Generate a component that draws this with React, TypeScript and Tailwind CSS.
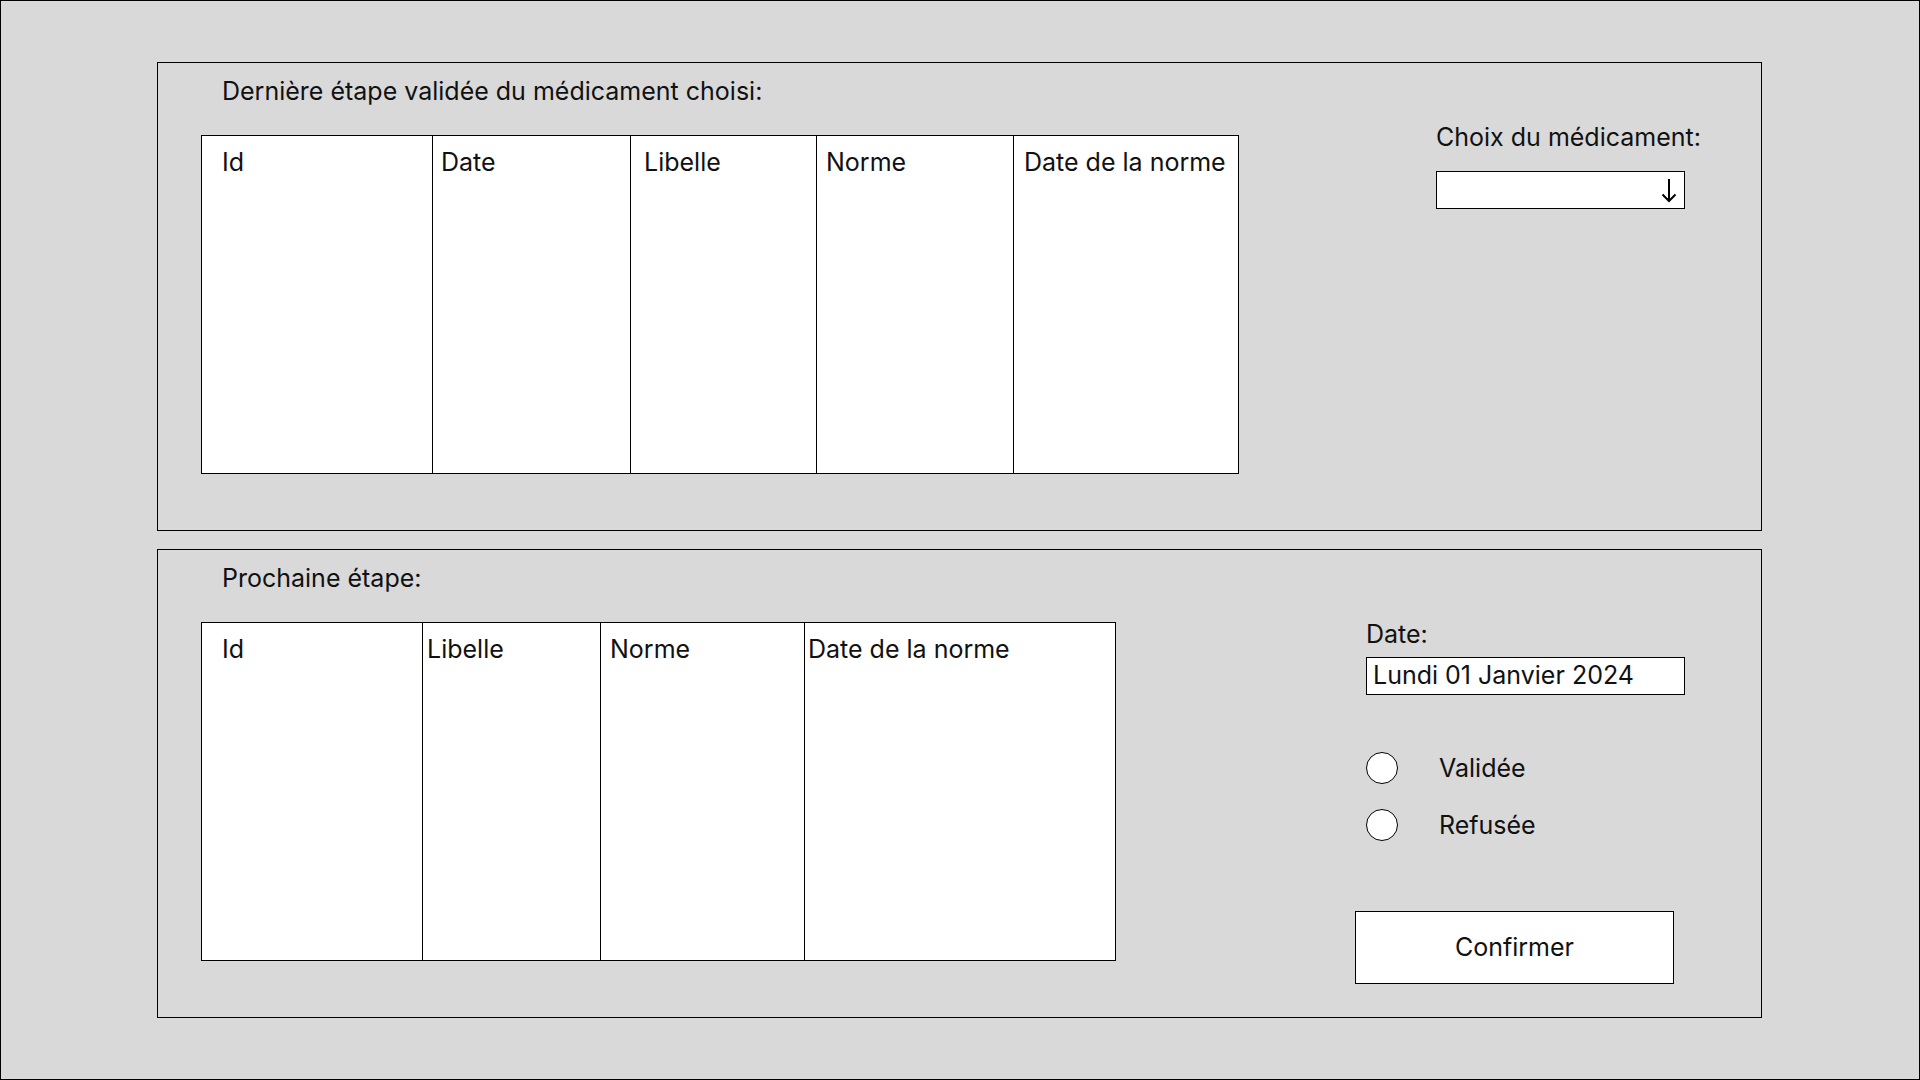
import React from "react";

const cellBase = "h-full border-l border-black first:border-l-0";

function Table({ cols }: { cols: { label: string; w: string; pl: string }[] }) {
  return (
    <div className="flex h-[339px] border border-black bg-white">
      {cols.map((c) => (
        <div key={c.label} className={`${cellBase} ${c.w} ${c.pl} pt-[8px] shrink-0`}>
          <span className="leading-[30px]">{c.label}</span>
        </div>
      ))}
    </div>
  );
}

function ArrowDown() {
  return (
    <svg width="16" height="25" viewBox="0 0 16 25" fill="none" stroke="#000" strokeWidth="2">
      <path d="M8 1 V23" />
      <path d="M1.5 16.5 L8 23 L14.5 16.5" />
    </svg>
  );
}

function Radio({ label }: { label: string }) {
  return (
    <div className="flex items-center">
      <div className="w-[32px] h-[32px] rounded-full border border-black bg-white shrink-0" />
      <span className="ml-[41px] leading-[30px]">{label}</span>
    </div>
  );
}

export default function App() {
  return (
    <div className="w-[1920px] h-[1080px] border border-black bg-[#d9d9d9] text-[25px] text-[#111] font-['Inter',sans-serif] pl-[156px] pt-[61px] flex flex-col gap-[18px] overflow-hidden">
      {/* Panel 1 */}
      <div className="w-[1605px] h-[469px] border border-black flex">
        <div className="pl-[43px] pt-[13px] flex flex-col">
          <div className="ml-[21px] leading-[30px]">Dernière étape validée du médicament choisi:</div>
          <div className="mt-[29px] w-[1038px]">
            <Table
              cols={[
                { label: "Id", w: "w-[230px]", pl: "pl-[20px]" },
                { label: "Date", w: "w-[198px]", pl: "pl-[8px]" },
                { label: "Libelle", w: "w-[186px]", pl: "pl-[13px]" },
                { label: "Norme", w: "w-[197px]", pl: "pl-[9px]" },
                { label: "Date de la norme", w: "w-[225px]", pl: "pl-[10px]" },
              ]}
            />
          </div>
        </div>
        <div className="ml-[197px] pt-[59px] flex flex-col">
          <div className="leading-[30px]">Choix du médicament:</div>
          <div className="mt-[19px] w-[249px] h-[38px] border border-black bg-white flex items-center justify-end pr-[7px]">
            <ArrowDown />
          </div>
        </div>
      </div>

      {/* Panel 2 */}
      <div className="w-[1605px] h-[469px] border border-black flex">
        <div className="pl-[43px] pt-[13px] flex flex-col">
          <div className="ml-[21px] leading-[30px]">Prochaine étape:</div>
          <div className="mt-[29px] w-[915px]">
            <Table
              cols={[
                { label: "Id", w: "w-[220px]", pl: "pl-[20px]" },
                { label: "Libelle", w: "w-[178px]", pl: "pl-[4px]" },
                { label: "Norme", w: "w-[204px]", pl: "pl-[9px]" },
                { label: "Date de la norme", w: "w-[311px]", pl: "pl-[3px]" },
              ]}
            />
          </div>
        </div>
        <div className="ml-[239px] pt-[69px] flex flex-col">
          <div className="ml-[11px] leading-[30px]">Date:</div>
          <div className="ml-[11px] mt-[8px] w-[319px] h-[38px] border border-black bg-white flex items-center pl-[6px]">
            Lundi 01 Janvier 2024
          </div>
          <div className="ml-[11px] mt-[57px] flex flex-col gap-[25px]">
            <Radio label="Validée" />
            <Radio label="Refusée" />
          </div>
          <div className="mt-[70px] w-[319px] h-[73px] border border-black bg-white flex items-center justify-center">
            Confirmer
          </div>
        </div>
      </div>
    </div>
  );
}
